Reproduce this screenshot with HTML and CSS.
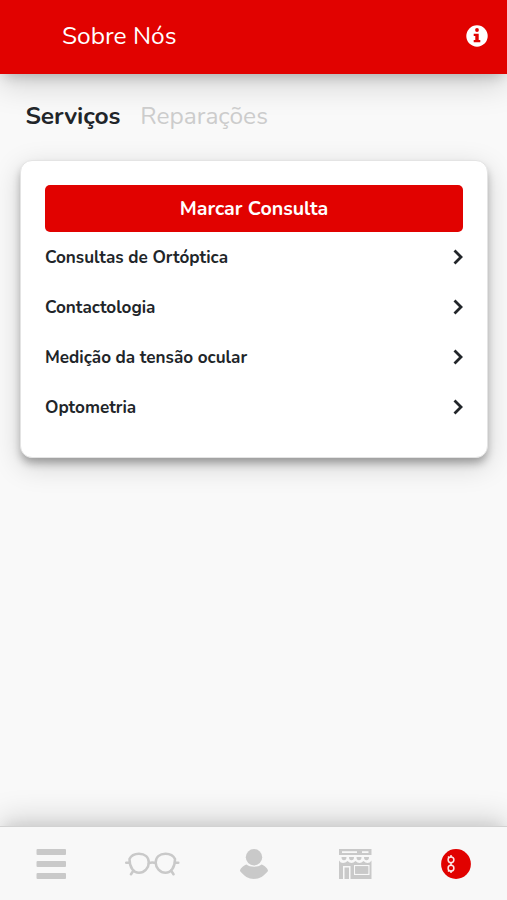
FILE: index.html
```
<!DOCTYPE html>
<html lang="pt">
<head>
<meta charset="utf-8">
<title>Sobre Nós</title>
<link rel="stylesheet" href="styles.css">
</head>
<body>
<header class="header">
  <h1 class="title">Sobre Nós</h1>
  <svg class="info" viewBox="0 0 22 22"><circle cx="11" cy="11" r="10.700" fill="#fff"/><circle cx="11" cy="5" r="1.900" fill="#e10200"/><path d="M7.700 8.700h5v6.400h1.600v2.200H7.700v-2.200h1.600v-4.200H7.700z" fill="#e10200"/></svg>
</header>
<main class="content">
  <div class="tabs">
    <span class="tab active">Serviços</span>
    <span class="tab muted">Reparações</span>
  </div>
  <section class="card">
    <button class="book">Marcar Consulta</button>
    <ul class="list">
      <li class="row"><span>Consultas de Ortóptica</span><svg class="chevron" viewBox="0 0 10 16"><path d="M1.500 1.500 8 8l-6.500 6.500"/></svg></li>
      <li class="row"><span>Contactologia</span><svg class="chevron" viewBox="0 0 10 16"><path d="M1.500 1.500 8 8l-6.500 6.500"/></svg></li>
      <li class="row"><span>Medição da tensão ocular</span><svg class="chevron" viewBox="0 0 10 16"><path d="M1.500 1.500 8 8l-6.500 6.500"/></svg></li>
      <li class="row"><span>Optometria</span><svg class="chevron" viewBox="0 0 10 16"><path d="M1.500 1.500 8 8l-6.500 6.500"/></svg></li>
    </ul>
  </section>
</main>
<nav class="nav">
  <a class="item"><svg width="30" height="30" viewBox="0 0 30 30" fill="#c9c9c9"><rect x=".5" y="0" width="29.500" height="6" rx="1"/><rect x=".5" y="12" width="29.500" height="6" rx="1"/><rect x=".5" y="24" width="29.500" height="6" rx="1"/></svg></a>
  <a class="item"><svg width="56" height="24" viewBox="0 0 56 24" fill="none" stroke="#c9c9c9" stroke-width="2.500" stroke-linecap="round" stroke-linejoin="round"><path d="M5.500 7C7.500 2.500 11 1.700 15 1.700c6 0 9.800 3.500 9.800 8.800S20.500 20.800 15 20.800 5.500 15.500 5.500 7zM51 7C49 2.500 45.500 1.700 41.500 1.700c-6 0-9.800 3.500-9.800 8.800S36 20.800 41.500 20.800 51 15.500 51 7z"/><path d="M24.800 11.200q3.500-1.500 7 0M5.500 10.800H2.200M51 10.800h3.300M9.500 18.500l-2.500 3.800M47 18.500l2.500 3.800"/></svg></a>
  <a class="item"><svg width="28" height="30" viewBox="0 0 28 30" fill="#c9c9c9"><circle cx="14" cy="8.300" r="8.200"/><path d="M6.500 15.500C10 18.500 18 18.500 21.500 15.500 25 17 28 19.500 28 22c-4 5-8.500 8-14 8S4 27 0 22c0-2.500 3-5 6.500-6.500z"/></svg></a>
  <a class="item"><svg width="34" height="30" viewBox="0 0 34 30" fill="#c9c9c9"><path fill-rule="evenodd" d="M1 0h32.500v6H1zM4 2.300v1.600h15V2.300zM24 2.300v1.600h6.500V2.300z"/><path d="M3.500 8h5q0 3.200-2.500 3.200T3.500 8zM11 8h5q0 3.200-2.500 3.200T11 8zM18.500 8h5q0 3.200-2.500 3.200T18.500 8zM26 8h5q0 3.200-2.500 3.200T26 8z"/><path fill-rule="evenodd" d="M1 11.500q1.500 2.500 4 2.500 2.500 0 4.500-2 2 2 4 2t4-2q2 2 4 2t4-2q2 2 4 2 2.500 0 4-2.500V30H1zM5 17v13h1.500V18.500H11V30h1.500V17zM16 16v10h15.500V16zM17.200 17.200h13v7.600h-13z"/><path fill-rule="evenodd" d="M17.200 17.200h13v7.600h-13zM18 18v6h11.500v-6z"/><path d="M19 18.800h9.500v4.500H19z"/></svg></a>
  <a class="item"><svg class="services" width="30" height="30" viewBox="0 0 30 30"><circle cx="15" cy="15" r="14.900" fill="#e10200"/><g fill="none" stroke="#fff" stroke-width="1.500" stroke-opacity=".9"><circle cx="10" cy="10.800" r="2.900"/><circle cx="10" cy="19.200" r="2.900"/><path d="M10 6v2M10 13.600v2.800M10 22v2M8 7.500l-1 1M8 22.500l-1-1"/></g></svg></a>
</nav>
</body>
</html>
```
FILE: styles.css
```
* { box-sizing: border-box; }
body {
  margin: 0;
  height: 900px;
  display: flex;
  flex-direction: column;
  overflow: hidden;
  background: #f9f9f9;
  color: #212529;
  font-family: Nunito, Lato, sans-serif;
}
.header {
  height: 74px;
  flex: none;
  display: flex;
  align-items: center;
  justify-content: space-between;
  padding: 0 19.5px 0 62px;
  background: #e10200;
  box-shadow: 0 7px 12px -5px rgba(0, 0, 0, .2), 0 10px 32px rgba(0, 0, 0, .17);
}
.title {
  margin: 0 0 2px;
  color: #fff;
  font-size: 24.5px;
  font-weight: 400;
  line-height: 34px;
}
.info { width: 22px; height: 22px; margin-bottom: 2px; }
.content { flex: 1; padding: 25px 19px 0 20px; }
.tabs {
  display: flex;
  gap: 20px;
  padding-left: 5.5px;
  font-size: 24.5px;
  line-height: 34px;
}
.active { font-weight: 700; letter-spacing: -.1px; }
.muted { color: #ccc; }
.card {
  height: 298px;
  margin-top: 27px;
  padding: 24px;
  border: 1px solid #e4e4e4;
  border-radius: 12px;
  background: #fff;
  box-shadow: 0 6px 9px -1px rgba(0, 0, 0, .3), 0 8px 28px rgba(0, 0, 0, .17);
}
.book {
  display: block;
  width: 100%;
  height: 47px;
  padding: 0;
  border: 0;
  border-radius: 5px;
  background: #e10200;
  color: #fff;
  font: 700 19.6px/30px Nunito, Lato, sans-serif;
}
.list { margin: 0; padding: 0; list-style: none; }
.row {
  height: 50px;
  display: flex;
  justify-content: space-between;
  align-items: center;
  font-size: 17.1px;
  font-weight: 700;
}
.chevron { width: 10px; height: 16px; fill: none; stroke: #212529; stroke-width: 2.8; }
.nav {
  height: 74px;
  flex: none;
  display: flex;
  justify-content: space-between;
  border-top: 1px solid #d2d2d2;
  background: #f8f8f8;
  box-shadow: 0 -7px 12px -5px rgba(0, 0, 0, .08), 0 -8px 30px rgba(0, 0, 0, .15);
}
.item { width: 101px; display: flex; align-items: center; justify-content: center; }
.services { margin-right: 1px; }
```
